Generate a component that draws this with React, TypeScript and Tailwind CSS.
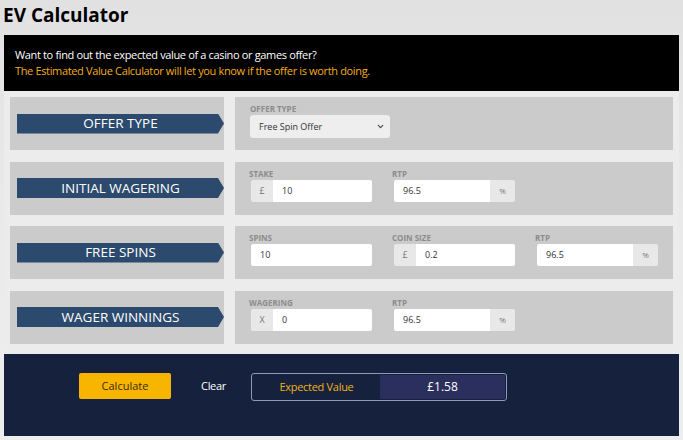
import React from 'react';
import { ChevronDown } from 'lucide-react';

const font = { fontFamily: '"Open Sans", "Liberation Sans", sans-serif' };

const Banner: React.FC<{ title: string }> = ({ title }) => (
  <div className="w-[214px] shrink-0 bg-[#cbcbcb] flex items-center pl-[7px]">
    <div className="w-[213px] h-[20px] bg-[#2c4a6d] text-white text-[13.5px] flex items-center justify-center [clip-path:polygon(0_0,calc(100%-6px)_0,100%_50%,calc(100%-6px)_100%,0_100%)]">
      {title}
    </div>
  </div>
);

const Field: React.FC<{ label: string; value: string; prefix?: string; suffix?: string }> = ({ label, value, prefix, suffix }) => (
  <div className="w-[121px]">
    <div className="text-[8px] font-bold text-[#8c8c8c] leading-[13px] uppercase -ml-[2px]">{label}</div>
    <div className="flex h-[22px] rounded-[2px] overflow-hidden">
      {prefix && <div className="w-[22px] bg-[#e8e8e8] text-[#777] text-[9px] flex items-center justify-center">{prefix}</div>}
      <div className="flex-1 bg-white text-[9px] text-[#333] flex items-center pl-[9px]">{value}</div>
      {suffix && <div className="w-[25px] bg-[#e8e8e8] text-[#777] text-[8px] flex items-center justify-center">{suffix}</div>}
    </div>
  </div>
);

const Row: React.FC<{ title: string; children: React.ReactNode }> = ({ title, children }) => (
  <div className="flex gap-[11px] h-[53px]">
    <Banner title={title} />
    <div className="flex-1 bg-[#cbcbcb] pl-[16px] pt-[5px] flex gap-[22px]">{children}</div>
  </div>
);

export default function App() {
  return (
    <div className="w-[683px] h-[440px] bg-gradient-to-b from-[#e1e1e1] via-[#eaeaea] to-[#eeeeee] overflow-hidden" style={font}>
      <h1 className="h-[35px] pl-[3px] pt-[1px] text-[19px] font-bold text-black leading-[28px]">EV Calculator</h1>
      <div className="mx-[4px]">
        <div className="h-[56px] bg-black px-[11px] pt-[12px] text-[11px] leading-[16px] tracking-[-0.35px]">
          <p className="text-white">Want to find out the expected value of a casino or games offer?</p>
          <p className="text-[#f2ae1c]">The Estimated Value Calculator will let you know if the offer is worth doing.</p>
        </div>
        <div className="bg-[#ececec] px-[6px] pt-[6px] pb-[10.5px] flex flex-col gap-[11.5px]">
          <Row title="OFFER TYPE">
            <div>
              <div className="text-[8px] font-bold text-[#8c8c8c] leading-[13px] -ml-[1px]">OFFER TYPE</div>
              <div className="w-[140px] h-[23px] bg-[#eeeeee] rounded-[3px] flex items-center justify-between pl-[9px] pr-[5px] text-[9px] text-[#333] -ml-[1px]">
                <span>Free Spin Offer</span>
                <ChevronDown size={9} strokeWidth={3} className="text-[#444]" />
              </div>
            </div>
          </Row>
          <Row title="INITIAL WAGERING">
            <Field label="Stake" value="10" prefix="£" />
            <Field label="RTP" value="96.5" suffix="%" />
          </Row>
          <Row title="FREE SPINS">
            <Field label="Spins" value="10" />
            <Field label="Coin Size" value="0.2" prefix="£" />
            <Field label="RTP" value="96.5" suffix="%" />
          </Row>
          <Row title="WAGER WINNINGS">
            <Field label="Wagering" value="0" prefix="X" />
            <Field label="RTP" value="96.5" suffix="%" />
          </Row>
        </div>
        <div className="h-[82px] bg-[#15213d] pl-[75px] pt-[19px] flex items-start">
          <button className="w-[92px] h-[26px] bg-[#f8b500] rounded-[2px] text-[11px] text-[#3b2b05]">Calculate</button>
          <span className="ml-[30px] mt-[5px] text-[11px] text-white tracking-[-0.3px]">Clear</span>
          <div className="ml-[25px] w-[256px] h-[28px] border border-[#8b9ab6] rounded-[3px] flex p-[1px]">
            <div className="w-[127px] flex items-center justify-center text-[11px] text-[#f0b21a] tracking-[-0.3px]">Expected Value</div>
            <div className="flex-1 bg-[#2b2f5d] rounded-[1px] flex items-center justify-center text-[12px] text-white">£1.58</div>
          </div>
        </div>
      </div>
    </div>
  );
}
